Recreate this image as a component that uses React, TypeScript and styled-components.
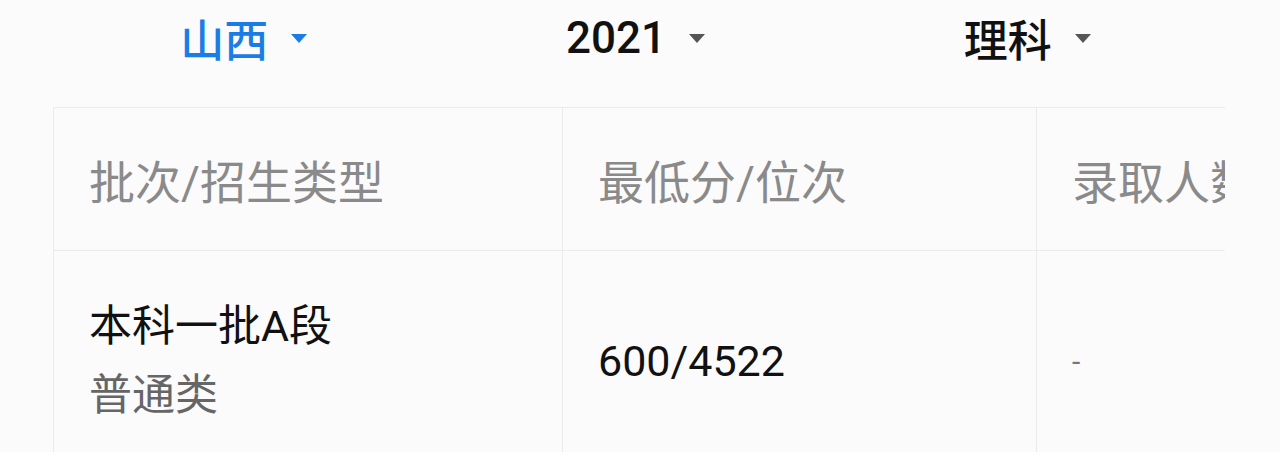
import React from "react";
import styled, { createGlobalStyle } from "styled-components";

const Global = createGlobalStyle`
  html, body {
    margin: 0;
    padding: 0;
    background: #fbfbfc;
    font-family: Roboto, "Noto Sans CJK SC", sans-serif;
  }
  * { box-sizing: border-box; }
`;

const Page = styled.div`
  width: 1280px;
  height: 452px;
  overflow: hidden;
  background: #fbfbfc;
`;

const FilterBar = styled.div`
  display: grid;
  grid-template-columns: repeat(3, 1fr);
  height: 75px;
  padding: 0 57px 0 48px;
  margin-bottom: 32px;
`;

const Filter = styled.div<{ $active?: boolean }>`
  display: flex;
  align-items: center;
  justify-content: center;
  gap: 23px;
  font-size: 44px;
  font-weight: 500;
  color: ${(p) => (p.$active ? "#1a7de6" : "#111")};
`;

const Caret = styled.span<{ $active?: boolean }>`
  width: 0;
  height: 0;
  border-left: 8px solid transparent;
  border-right: 8px solid transparent;
  border-top: 9px solid ${(p) => (p.$active ? "#1a7de6" : "#555")};
  margin-top: 2px;
`;

const TableWrap = styled.div`
  margin-left: 53px;
  width: 1172px;
  overflow: hidden;
`;

const Table = styled.div`
  display: grid;
  grid-template-columns: 509px 474px 400px;
  width: 1383px;
  border-top: 1px solid #ebebed;
  border-left: 1px solid #ebebed;
`;

const HeadCell = styled.div`
  height: 143px;
  display: flex;
  align-items: center;
  padding-left: 35px;
  font-size: 46px;
  color: #8a8a8a;
  white-space: nowrap;
  border-right: 1px solid #ebebed;
  border-bottom: 1px solid #ebebed;
`;

const Cell = styled.div`
  height: 220px;
  display: flex;
  flex-direction: column;
  justify-content: center;
  padding-left: 35px;
  font-size: 43px;
  line-height: 69px;
  color: #111;
  white-space: nowrap;
  border-right: 1px solid #ebebed;
`;

const SubText = styled.div`
  color: #666;
`;

const Dash = styled.div`
  color: #777;
  font-size: 30px;
`;

export default function App() {
  return (
    <Page>
      <Global />
      <FilterBar>
        <Filter $active>
          山西<Caret $active />
        </Filter>
        <Filter>
          2021<Caret />
        </Filter>
        <Filter>
          理科<Caret />
        </Filter>
      </FilterBar>
      <TableWrap>
        <Table>
          <HeadCell>批次/招生类型</HeadCell>
          <HeadCell>最低分/位次</HeadCell>
          <HeadCell>录取人数</HeadCell>
          <Cell>
            <div>本科一批A段</div>
            <SubText>普通类</SubText>
          </Cell>
          <Cell>600/4522</Cell>
          <Cell>
            <Dash>-</Dash>
          </Cell>
        </Table>
      </TableWrap>
    </Page>
  );
}
